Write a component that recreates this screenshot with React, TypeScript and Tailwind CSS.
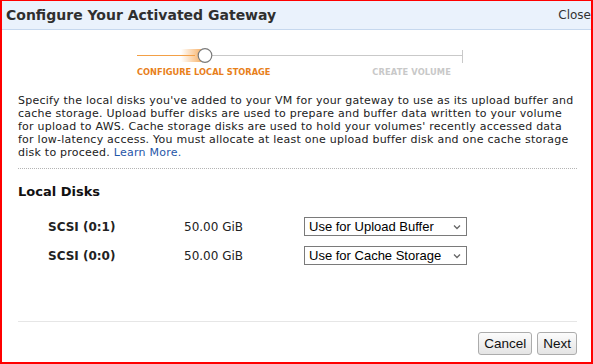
import React from 'react';

const verdana = { fontFamily: '"DejaVu Sans", Verdana, sans-serif' };

function Stepper() {
  return (
    <div className="flex flex-col pl-[135px] pt-[18px]">
      <svg width="330" height="16" viewBox="0 0 330 16">
        <defs>
          <linearGradient id="glow" x1="0" x2="1" y1="0" y2="0">
            <stop offset="0" stopColor="#f6a24a" stopOpacity="0" />
            <stop offset="1" stopColor="#f6a24a" stopOpacity="0.8" />
          </linearGradient>
        </defs>
        <line x1="0" y1="7.5" x2="58" y2="7.5" stroke="#f3a046" strokeWidth="1" />
        <rect x="44" y="1" width="20" height="13" fill="url(#glow)" />
        <line x1="75" y1="7.5" x2="325" y2="7.5" stroke="#c9c9c9" strokeWidth="1" />
        <line x1="325.5" y1="2" x2="325.5" y2="15" stroke="#c9c9c9" strokeWidth="1" />
        <circle cx="68" cy="7.5" r="6.8" fill="#ffffff" stroke="#7a7a7a" strokeWidth="1.2" />
      </svg>
      <div
        className="flex w-[330px] justify-between pt-[2px] text-[9.2px] font-bold leading-[12px]"
        style={{ fontFamily: '"DejaVu Sans Condensed", "DejaVu Sans", sans-serif' }}
      >
        <span className="text-[#e8801a]">CONFIGURE LOCAL STORAGE</span>
        <span className="mr-[16px] tracking-[0.15px] text-[#c8c8c8]">CREATE VOLUME</span>
      </div>
    </div>
  );
}

function FakeSelect({ value }: { value: string }) {
  return (
    <div
      className="flex h-[19px] w-[163px] items-center justify-between border border-[#7a7a7a] bg-white pl-[4px] pr-[5px] text-[13px] text-black"
      style={{ fontFamily: '"Liberation Sans", Arial, sans-serif' }}
    >
      <span className="leading-none">{value}</span>
      <svg width="8" height="6" viewBox="0 0 8 6">
        <path d="M1 1.5 L4 4.5 L7 1.5" fill="none" stroke="#666" strokeWidth="1.3" />
      </svg>
    </div>
  );
}

function DiskRow({ name, size, use }: { name: string; size: string; use: string }) {
  return (
    <div className="flex h-[19px] items-center text-[12px] text-[#222]">
      <span className="w-[166px] pl-[30px] font-bold">{name}</span>
      <span className="w-[120px]">{size}</span>
      <FakeSelect value={use} />
    </div>
  );
}

function Button({ label }: { label: string }) {
  return (
    <button
      className="h-[23px] rounded-[3px] border border-[#acacac] bg-gradient-to-b from-[#fcfcfc] to-[#e4e4e4] px-[5px] text-[13.5px] leading-none text-[#111]"
      style={{ fontFamily: '"Liberation Sans", Arial, sans-serif' }}
    >
      {label}
    </button>
  );
}

export default function App() {
  return (
    <div
      className="flex h-[364px] w-[593px] flex-col border-x-2 border-b-2 border-t border-[#ff0000] bg-white"
      style={verdana}
    >
      {/* Title bar */}
      <div className="flex h-[29px] shrink-0 items-center justify-between border-b border-[#c6d8ee] bg-[#eaf2fc] pl-[4px] pr-0">
        <h1 className="text-[14px] font-bold text-[#2f2f2f]">Configure Your Activated Gateway</h1>
        <span className="text-[12px] text-[#333]">Close</span>
      </div>

      <Stepper />

      {/* Description */}
      <div className="px-[16px] pt-[16px]">
        <p className="whitespace-nowrap text-[11px] leading-[13px] tracking-[0.24px] text-[#222]">
          Specify the local disks you've added to your VM for your gateway to use as its upload buffer and
          <br />
          cache storage. Upload buffer disks are used to prepare and buffer data written to your volume
          <br />
          for upload to AWS. Cache storage disks are used to hold your volumes' recently accessed data
          <br />
          for low-latency access. You must allocate at least one upload buffer disk and one cache storage
          <br />
          disk to proceed. <a className="text-[#1f56a8]">Learn More.</a>
        </p>
        <div className="mt-[9px] w-[559px] border-t border-dotted border-[#b4b4b4]" />
      </div>

      {/* Local disks */}
      <div className="px-[16px] pt-[15px]">
        <h2 className="text-[13px] font-bold leading-[16px] text-[#111]">Local Disks</h2>
        <div className="flex flex-col gap-[10px] pt-[17px]">
          <DiskRow name="SCSI (0:1)" size="50.00 GiB" use="Use for Upload Buffer" />
          <DiskRow name="SCSI (0:0)" size="50.00 GiB" use="Use for Cache Storage" />
        </div>
      </div>

      {/* Footer */}
      <div className="mt-auto px-[16px] pb-[7px]">
        <div className="w-[559px] border-t border-[#e6e6e6]" />
        <div className="flex w-[559px] justify-end gap-[5px] pt-[10px]">
          <Button label="Cancel" />
          <Button label="Next" />
        </div>
      </div>
    </div>
  );
}
